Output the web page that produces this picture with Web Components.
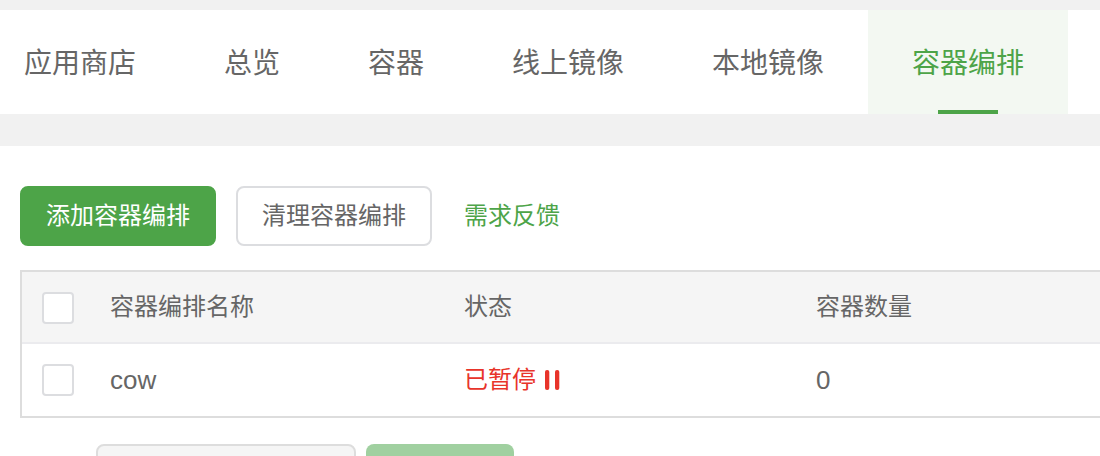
<!DOCTYPE html>
<html lang="zh">
<head>
<meta charset="utf-8">
<title>容器编排</title>
<style>
  html, body {
    margin: 0;
    height: 456px;
    overflow: hidden;
    background: #f1f1f1;
    color: #666;
    font-family: "Noto Sans CJK SC", "Liberation Sans", sans-serif;
  }
</style>
</head>
<body>
<app-shell>
  <tab-bar>
    <tab-item>应用商店</tab-item>
    <tab-item>总览</tab-item>
    <tab-item>容器</tab-item>
    <tab-item>线上镜像</tab-item>
    <tab-item>本地镜像</tab-item>
    <tab-item active>容器编排</tab-item>
  </tab-bar>
  <tool-bar>
    <ui-button kind="primary">添加容器编排</ui-button>
    <ui-button>清理容器编排</ui-button>
    <ui-button kind="link">需求反馈</ui-button>
  </tool-bar>
  <data-table>
    <table-row head>
      <span>容器编排名称</span>
      <span>状态</span>
      <span>容器数量</span>
    </table-row>
    <table-row>
      <span class="latin">cow</span>
      <status-paused>已暂停</status-paused>
      <span class="latin">0</span>
    </table-row>
  </data-table>
  <page-footer></page-footer>
</app-shell>

<script>
(function() {
  class AppShell extends HTMLElement {
    connectedCallback() {
      const root = this.attachShadow({mode: 'open'});
      root.innerHTML =
        `<style>
          :host {
            display: block;
            padding-top: 10px;
          }
        </style>
        <slot></slot>`;
    }
  }

  class TabBar extends HTMLElement {
    connectedCallback() {
      const root = this.attachShadow({mode: 'open'});
      root.innerHTML =
        `<style>
          :host {
            display: flex;
            height: 104px;
            background: #fff;
            margin-bottom: 32px;
            padding-left: 24px;
          }
          ::slotted(tab-item:first-child) {
            margin-left: -44px;
          }
        </style>
        <slot></slot>`;
    }
  }

  class TabItem extends HTMLElement {
    connectedCallback() {
      const root = this.attachShadow({mode: 'open'});
      root.innerHTML =
        `<style>
          :host {
            box-sizing: border-box;
            display: flex;
            align-items: center;
            position: relative;
            height: 104px;
            padding: 0 44px 2px;
            font-size: 28px;
            line-height: 1;
            white-space: nowrap;
          }
          :host([active]) {
            background: #f3f8f2;
            color: #4da448;
          }
          :host([active])::after {
            content: '';
            position: absolute;
            left: 70px;
            bottom: 0;
            width: 60px;
            height: 4px;
            background: #4da448;
          }
        </style>
        <slot></slot>`;
    }
  }

  class ToolBar extends HTMLElement {
    connectedCallback() {
      const root = this.attachShadow({mode: 'open'});
      root.innerHTML =
        `<style>
          :host {
            display: flex;
            gap: 20px;
            align-items: center;
            height: 60px;
            padding: 40px 20px 24px;
            background: #fff;
          }
        </style>
        <slot></slot>`;
    }
  }

  class UiButton extends HTMLElement {
    connectedCallback() {
      const root = this.attachShadow({mode: 'open'});
      root.innerHTML =
        `<style>
          :host {
            box-sizing: border-box;
            display: flex;
            align-items: center;
            justify-content: center;
            height: 60px;
            width: 196px;
            padding-bottom: 4px;
            border: 2px solid #dcdde0;
            border-radius: 8px;
            background: #fff;
            font-size: 24px;
            line-height: 1;
            white-space: nowrap;
          }
          :host([kind="primary"]) {
            background: #4da448;
            border-color: #4da448;
            color: #fff;
          }
          :host([kind="link"]) {
            width: auto;
            border: 0;
            background: none;
            color: #4da448;
            margin-left: 12px;
          }
        </style>
        <slot></slot>`;
    }
  }

  class DataTable extends HTMLElement {
    connectedCallback() {
      const root = this.attachShadow({mode: 'open'});
      root.innerHTML =
        `<style>
          :host {
            display: block;
            background: #fff;
            padding: 0 0 26px 20px;
          }
          .frame {
            border: 2px solid #ddd;
            border-right: 0;
          }
        </style>
        <div class="frame"><slot></slot></div>`;
    }
  }

  class TableRow extends HTMLElement {
    connectedCallback() {
      const root = this.attachShadow({mode: 'open'});
      root.innerHTML =
        `<style>
          :host {
            display: grid;
            grid-template-columns: 354px 352px 1fr;
            align-items: center;
            height: 72px;
            padding-left: 88px;
            position: relative;
            font-size: 24px;
            line-height: 1;
            background: #fff;
          }
          :host([head]) {
            height: 70px;
            background: #f5f5f5;
            border-bottom: 2px solid #ebebee;
          }
          ::slotted(.latin) {
            font-family: "Liberation Sans", sans-serif;
            font-size: 26px;
            margin-top: -1px;
          }
          ::slotted(span:not(.latin)) {
            margin-top: -4px;
          }
          .check {
            box-sizing: border-box;
            position: absolute;
            left: 20px;
            top: 20px;
            width: 32px;
            height: 32px;
            border: 2px solid #dcdde0;
            border-radius: 4px;
            background: #fff;
          }
        </style>
        <div class="check"></div>
        <slot></slot>`;
    }
  }

  class StatusPaused extends HTMLElement {
    connectedCallback() {
      const root = this.attachShadow({mode: 'open'});
      root.innerHTML =
        `<style>
          :host {
            display: flex;
            align-items: center;
            gap: 9px;
            color: #e8342a;
          }
          .label {
            padding-bottom: 4px;
          }
          svg {
            display: block;
          }
        </style>
        <div class="label"><slot></slot></div>
        <svg width="15" height="20" viewBox="0 0 15 20" fill="#e8342a">
          <rect x="0" y="0" width="4.3" height="20" rx="2"/>
          <rect x="10" y="0" width="4.3" height="20" rx="2"/>
        </svg>`;
    }
  }

  class PageFooter extends HTMLElement {
    connectedCallback() {
      const root = this.attachShadow({mode: 'open'});
      root.innerHTML =
        `<style>
          :host {
            display: flex;
            gap: 10px;
            height: 12px;
            overflow: hidden;
            padding-left: 96px;
            background: #fff;
          }
          .input {
            box-sizing: border-box;
            width: 260px;
            height: 60px;
            border: 2px solid #ddd;
            border-radius: 8px;
            background: #f5f5f5;
          }
          .go {
            width: 148px;
            height: 60px;
            border-radius: 8px;
            background: #a0d0a0;
          }
        </style>
        <div class="input"></div>
        <div class="go"></div>`;
    }
  }

  customElements.define('app-shell', AppShell);
  customElements.define('tab-bar', TabBar);
  customElements.define('tab-item', TabItem);
  customElements.define('tool-bar', ToolBar);
  customElements.define('ui-button', UiButton);
  customElements.define('data-table', DataTable);
  customElements.define('table-row', TableRow);
  customElements.define('status-paused', StatusPaused);
  customElements.define('page-footer', PageFooter);
}());
</script>
</body>
</html>
